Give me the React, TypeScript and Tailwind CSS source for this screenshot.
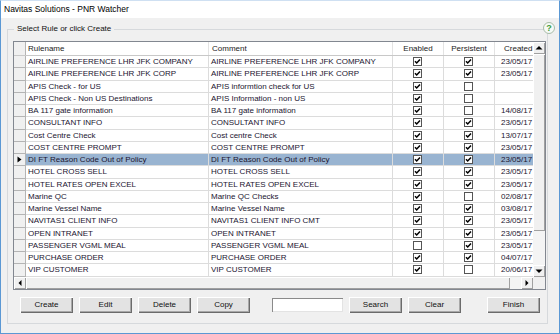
import React from "react";

type Rule = {
    name: string;
    comment: string;
    enabled: boolean;
    persistent: boolean;
    created: string;
};

const rules: Rule[] = [
    { name: "AIRLINE PREFERENCE LHR JFK COMPANY", comment: "AIRLINE PREFERENCE LHR JFK COMPANY", enabled: true, persistent: true, created: "23/05/17" },
    { name: "AIRLINE PREFERENCE LHR JFK CORP", comment: "AIRLINE PREFERENCE LHR JFK CORP", enabled: true, persistent: true, created: "23/05/17" },
    { name: "APIS Check - for US", comment: "APIS informtion check for US", enabled: true, persistent: false, created: "" },
    { name: "APIS Check - Non US Destinations", comment: "APIS Information - non US", enabled: true, persistent: false, created: "" },
    { name: "BA 117 gate information", comment: "BA 117 gate information", enabled: true, persistent: false, created: "14/08/17" },
    { name: "CONSULTANT INFO", comment: "CONSULTANT INFO", enabled: true, persistent: true, created: "23/05/17" },
    { name: "Cost Centre Check", comment: "Cost centre Check", enabled: true, persistent: true, created: "13/07/17" },
    { name: "COST CENTRE PROMPT", comment: "COST CENTRE PROMPT", enabled: true, persistent: true, created: "23/05/17" },
    { name: "DI FT Reason Code Out of Policy", comment: "DI FT Reason Code Out of Policy", enabled: true, persistent: true, created: "23/05/17" },
    { name: "HOTEL CROSS SELL", comment: "HOTEL CROSS SELL", enabled: true, persistent: true, created: "23/05/17" },
    { name: "HOTEL RATES OPEN EXCEL", comment: "HOTEL RATES OPEN EXCEL", enabled: true, persistent: true, created: "23/05/17" },
    { name: "Marine QC", comment: "Marine QC Checks", enabled: true, persistent: false, created: "02/08/17" },
    { name: "Marine Vessel Name", comment: "Marine Vessel Name", enabled: true, persistent: true, created: "03/08/17" },
    { name: "NAVITAS1 CLIENT INFO", comment: "NAVITAS1 CLIENT INFO CMT", enabled: true, persistent: true, created: "23/05/17" },
    { name: "OPEN INTRANET", comment: "OPEN INTRANET", enabled: true, persistent: true, created: "23/05/17" },
    { name: "PASSENGER VGML MEAL", comment: "PASSENGER VGML MEAL", enabled: false, persistent: true, created: "23/05/17" },
    { name: "PURCHASE ORDER", comment: "PURCHASE ORDER", enabled: true, persistent: true, created: "04/07/17" },
    { name: "VIP CUSTOMER", comment: "VIP CUSTOMER", enabled: true, persistent: false, created: "20/06/17" },
];

const SELECTED = 8;

function Check({ on }: { on: boolean }) {
    return (
        <svg width="9" height="9" viewBox="0 0 9 9" className="block">
            <rect x="0.5" y="0.5" width="8" height="8" fill="#fff" stroke="#555" />
            {on && <path d="M2 4.2 L3.7 6 L7 2.4" fill="none" stroke="#000" strokeWidth="1.5" />}
        </svg>
    );
}

const arrows = {
    up: "2.5,7.5 6,4 9.5,7.5",
    down: "2.5,4.5 6,8 9.5,4.5",
    left: "7.5,3 4.5,6 7.5,9",
    right: "4.5,3 7.5,6 4.5,9",
};

function ScrollButton({ dir }: { dir: keyof typeof arrows }) {
    return (
        <div className="w-[12px] h-[12px] shrink-0 bg-[#f0f0f0] shadow-[inset_1px_1px_0_#fff,inset_-1px_-1px_0_#a0a0a0]">
            <svg width="12" height="12" viewBox="0 0 12 12" className="block">
                <polygon points={arrows[dir]} fill="#000" />
            </svg>
        </div>
    );
}

function Button({ label, className = "" }: { label: string; className?: string }) {
    return (
        <div
            className={`w-[53px] h-[16px] flex items-center justify-center bg-[#e3e3e3] text-[8px] text-[#111] shadow-[inset_1px_1px_0_#fff,inset_-1px_-1px_0_#6b6b6b,inset_-2px_-2px_0_#a8a8a8] ${className}`}
        >
            {label}
        </div>
    );
}

function RuleRow({ rule, selected }: { rule: Rule; selected: boolean }) {
    const cell = selected ? "bg-[#99b4d1]" : "bg-white";
    return (
        <div className="grid grid-cols-[12px_183px_184px_51px_51px_38px] h-[12.25px] leading-[11.25px] text-[8px] text-[#1b1530]">
            <div className="bg-[#f0f0f0] border-r border-b border-[#b4b4b4] flex items-center justify-center">
                {selected && (
                    <svg width="5" height="7" viewBox="0 0 5 7" className="block">
                        <polygon points="0.5,0.5 4.5,3.5 0.5,6.5" fill="#000" />
                    </svg>
                )}
            </div>
            <div className={`${cell} border-r border-b border-[#dcdcdc] pl-[2px] whitespace-nowrap overflow-hidden`}>{rule.name}</div>
            <div className={`${cell} border-r border-b border-[#dcdcdc] pl-[2px] whitespace-nowrap overflow-hidden`}>{rule.comment}</div>
            <div className={`${cell} border-r border-b border-[#dcdcdc] flex items-center pl-[20px]`}>
                <Check on={rule.enabled} />
            </div>
            <div className={`${cell} border-r border-b border-[#dcdcdc] flex items-center pl-[20px]`}>
                <Check on={rule.persistent} />
            </div>
            <div className={`${cell} border-b border-[#dcdcdc] pl-[6px] whitespace-nowrap`}>{rule.created}</div>
        </div>
    );
}

export default function App() {
    return (
        <div className="relative w-[560px] h-[334px] flex flex-col border-x border-b border-t border-[#5b98d4] border-t-[#cfe0f2] bg-[#f0f0f0] font-['Liberation_Sans',Arial,sans-serif] overflow-hidden">
            <div className="h-[17px] shrink-0 bg-white flex items-center pl-[3px] text-[8.5px] text-black">
                Navitas Solutions - PNR Watcher
            </div>

            <div className="flex-1 pt-[5px] pl-[6px] pr-[11px]">
                <fieldset className="border border-[#d6d9dc] pl-[5px] pr-[1px] pb-[10px]">
                    <legend className="ml-[1px] px-[3px] text-[8px] leading-[12px] text-[#111]">
                        Select Rule or click Create
                    </legend>

                    <div className="mt-[6px] border border-[#828790] bg-white flex flex-col">
                        <div className="flex">
                            <div className="flex-1 overflow-hidden">
                                <div className="grid grid-cols-[12px_183px_184px_51px_51px_38px] h-[14px] leading-[13px] text-[8px] text-[#222] border-b border-[#c8c8c8]">
                                    <div className="bg-[#f0f0f0] border-r border-[#b4b4b4]" />
                                    <div className="border-r border-[#e3e3e3] pl-[2px]">Rulename</div>
                                    <div className="border-r border-[#e3e3e3] pl-[3px]">Comment</div>
                                    <div className="border-r border-[#e3e3e3] text-center">Enabled</div>
                                    <div className="border-r border-[#e3e3e3] text-center">Persistent</div>
                                    <div className="pl-[9px] whitespace-nowrap">Created</div>
                                </div>
                                {rules.map((r, i) => (
                                    <RuleRow key={r.name} rule={r} selected={i === SELECTED} />
                                ))}
                            </div>
                            <div className="w-[12px] shrink-0 flex flex-col bg-[#f4f4f4]">
                                <ScrollButton dir="up" />
                                <div className="h-[177px] bg-[#f0f0f0] shadow-[inset_1px_1px_0_#fff,inset_-1px_-1px_0_#a0a0a0]" />
                                <div className="flex-1" />
                                <ScrollButton dir="down" />
                            </div>
                        </div>
                        <div className="flex h-[12px] bg-[#f4f4f4]">
                            <ScrollButton dir="left" />
                            <div className="w-[484px] bg-[#f0f0f0] shadow-[inset_1px_1px_0_#fff,inset_-1px_-1px_0_#a0a0a0]" />
                            <div className="flex-1" />
                            <ScrollButton dir="right" />
                            <div className="w-[12px] bg-[#f0f0f0]" />
                        </div>
                    </div>

                    <div className="mt-[7px] flex items-center gap-[6px] pl-[7px]">
                        <Button label="Create" />
                        <Button label="Edit" />
                        <Button label="Delete" />
                        <Button label="Copy" />
                        <div className="ml-[16px] w-[71px] h-[14px] bg-white shadow-[inset_1px_1px_0_#8a8a8a,inset_-1px_-1px_0_#e3e3e3]" />
                        <Button label="Search" />
                        <Button label="Clear" />
                        <Button label="Finish" className="ml-[20px]" />
                    </div>
                </fieldset>
            </div>

            <div className="absolute left-[542px] top-[21px] w-[12px] h-[12px] rounded-full border border-[#a9bca9] bg-[#f6faf6] flex items-center justify-center text-[9px] leading-none font-bold text-[#3d9a3d]">
                ?
            </div>
        </div>
    );
}
